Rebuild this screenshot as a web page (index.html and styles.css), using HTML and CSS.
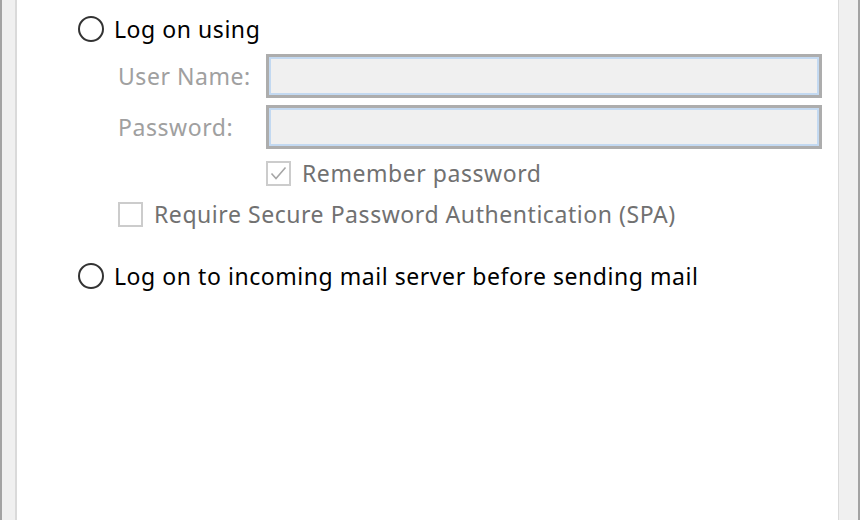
FILE: index.html
```html
<!DOCTYPE html>
<html>
<head>
    <link rel="stylesheet" href="styles.css">
</head>
<body>
    <div class="window">
        <div class="edge-left"></div>
        <div class="panel">
            <div class="option">
                <span class="radio"></span>
                <span class="option-label">Log on using</span>
            </div>

            <div class="logon">
                <div class="fields">
                    <label class="field-label">User Name:</label>
                    <div class="textbox"></div>
                    <label class="field-label">Password:</label>
                    <div class="textbox"></div>
                </div>

                <div class="check remember">
                    <span class="checkbox">
                        <svg width="21" height="21" viewBox="0 0 21 21">
                            <polyline points="3.5,10.5 8,15.5 17.5,4.5" fill="none" stroke="#a6a6a6" stroke-width="1.6"/>
                        </svg>
                    </span>
                    <span class="check-label">Remember password</span>
                </div>

                <div class="check spa">
                    <span class="checkbox"></span>
                    <span class="check-label">Require Secure Password Authentication (SPA)</span>
                </div>
            </div>

            <div class="option second">
                <span class="radio"></span>
                <span class="option-label">Log on to incoming mail server before sending mail</span>
            </div>
        </div>
        <div class="edge-right"></div>
    </div>
</body>
</html>
```

FILE: styles.css
```css
:root {
    --frame-bg: #f0f0f0;
    --frame-line: #dadada;
    --frame-dark: #a3a3a3;
    --text-color: #000000;
    --disabled-text: #a0a0a0;
    --check-text: #717171;
    --input-border: #adadad;
    --input-inner: #c3d9f1;
}

html, body {
    margin: 0;
    padding: 0;
    background: #ffffff;
}

body {
    font-family: 'Noto Sans', 'Open Sans', sans-serif;
    font-size: 23px;
    letter-spacing: 0.55px;
    color: var(--text-color);
}

.window {
    display: flex;
    height: 520px;
    overflow: hidden;
}

.edge-left {
    width: 13px;
    background: var(--frame-bg);
    border-left: 2px solid var(--frame-dark);
    border-right: 2px solid var(--frame-line);
}

.edge-right {
    width: 19px;
    background: var(--frame-bg);
    border-left: 1px solid var(--frame-line);
    border-right: 2px solid var(--frame-dark);
}

.panel {
    flex: 1;
    background: #ffffff;
    padding: 16px 16px 0 61px;
}

/* Radio options */
.option {
    display: flex;
    align-items: center;
    height: 26px;
    gap: 10px;
}

.option.second {
    margin-top: 36px;
}

.radio {
    width: 22px;
    height: 22px;
    border: 2px solid #333333;
    border-radius: 50%;
    background: #ffffff;
    flex-shrink: 0;
}

.option-label {
    white-space: nowrap;
    line-height: 24px;
}

/* Disabled logon fields */
.logon {
    margin-left: 40px;
    margin-top: 12px;
}

.fields {
    display: grid;
    grid-template-columns: 148px 556px;
    grid-auto-rows: 44px;
    row-gap: 7px;
    align-items: center;
}

.field-label {
    color: var(--disabled-text);
}

.textbox {
    height: 100%;
    box-sizing: border-box;
    border: 3px solid var(--input-border);
    box-shadow: inset 0 0 0 2px var(--input-inner);
    background: var(--frame-bg);
}

.check {
    display: flex;
    align-items: center;
    height: 26px;
    gap: 11px;
}

.check.remember {
    margin-top: 11px;
    padding-left: 148px;
}

.check.spa {
    margin-top: 15px;
}

.checkbox {
    width: 21px;
    height: 21px;
    border: 2px solid #cccccc;
    background: #ffffff;
    flex-shrink: 0;
    display: flex;
}

.check-label {
    color: var(--check-text);
    white-space: nowrap;
}
```
